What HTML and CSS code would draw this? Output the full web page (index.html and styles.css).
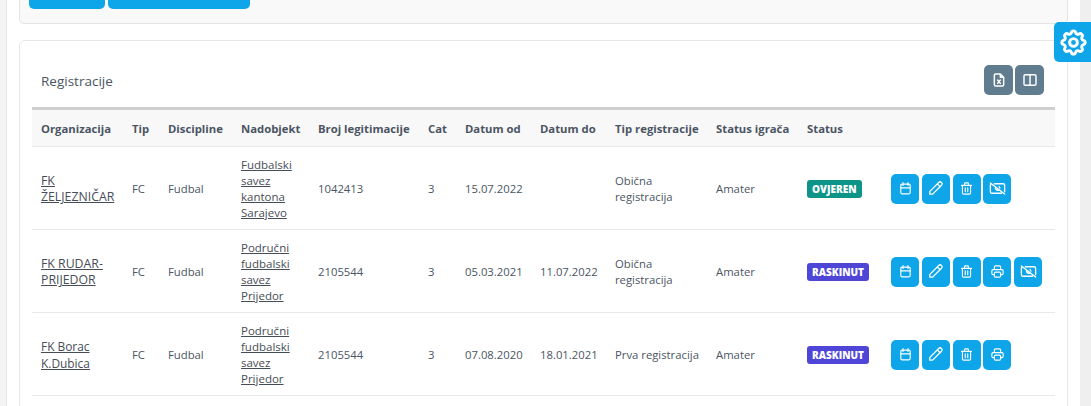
FILE: index.html
```html
<!DOCTYPE html>
<html lang="bs">
<head>
<meta charset="utf-8">
<title>Registracije</title>
<link rel="stylesheet" href="styles.css">
</head>
<body>
<svg class="defs" width="0" height="0" aria-hidden="true">
  <symbol id="i-cal" viewBox="0 0 24 24"><rect x="4.500" y="5" width="15" height="15.500" rx="2"/><path d="M16 2.500v4.500M8 2.500v4.500M4.500 11h15"/></symbol>
  <symbol id="i-pen" viewBox="0 0 24 24"><path d="M4 20v-4L16.500 3.500a2.800 2.800 0 0 1 4 4L8 20zM14.500 5.500l4 4"/></symbol>
  <symbol id="i-trash" viewBox="0 0 24 24"><path d="M4 7h16M10 11v6M14 11v6M5.500 7v12a2 2 0 0 0 2 2h9a2 2 0 0 0 2-2V7M9 7V4a1 1 0 0 1 1-1h4a1 1 0 0 1 1 1v3"/></symbol>
  <symbol id="i-print" viewBox="0 0 24 24"><path d="M17 17h2a2 2 0 0 0 2-2v-4a2 2 0 0 0-2-2H5a2 2 0 0 0-2 2v4a2 2 0 0 0 2 2h2M17 9V5a2 2 0 0 0-2-2H9a2 2 0 0 0-2 2v4"/><rect x="7" y="13" width="10" height="8" rx="2"/></symbol>
  <symbol id="i-off" viewBox="0 0 24 24"><path d="M3 5l18 14M8 6h11a2 2 0 0 1 2 2v8M17 18H5a2 2 0 0 1-2-2V8a2 2 0 0 1 1-1.700M9.500 10.500a3 3 0 0 0 4 3.500M14 9.500l1 2"/></symbol>
  <symbol id="i-xls" viewBox="0 0 24 24"><path d="M14 3v5h5M17 21H7a2 2 0 0 1-2-2V5a2 2 0 0 1 2-2h7l5 5v11a2 2 0 0 1-2 2zM10 12l4 5M14 12l-4 5"/></symbol>
  <symbol id="i-cols" viewBox="0 0 24 24"><rect x="3" y="4" width="18" height="16" rx="2"/><path d="M12 4v16"/></symbol>
  <symbol id="i-gear" viewBox="0 0 24 24"><path d="M10.325 4.317c.426-1.756 2.924-1.756 3.350 0a1.724 1.724 0 0 0 2.573 1.066c1.543-.940 3.310.826 2.370 2.370a1.724 1.724 0 0 0 1.065 2.572c1.756.426 1.756 2.924 0 3.350a1.724 1.724 0 0 0-1.066 2.573c.940 1.543-.826 3.310-2.370 2.370a1.724 1.724 0 0 0-2.572 1.065c-.426 1.756-2.924 1.756-3.350 0a1.724 1.724 0 0 0-2.573-1.066c-1.543.940-3.310-.826-2.370-2.370a1.724 1.724 0 0 0-1.065-2.572c-1.756-.426-1.756-2.924 0-3.350a1.724 1.724 0 0 0 1.066-2.573c-.940-1.543.826-3.310 2.370-2.370 1 .608 2.296.070 2.572-1.065z"/><circle cx="12" cy="12" r="3"/></symbol>
</svg>
<div class="shell">
  <div class="rail-left"></div>
  <main class="main">
    <section class="card-top">
      <button class="btn-top btn-a">Nazad</button>
      <button class="btn-top btn-b">Uvoz registracija</button>
    </section>
    <section class="card">
      <header class="card-head">
        <h2 class="card-title">Registracije</h2>
        <div class="tools">
          <button class="tool"><svg class="ico tool-ico"><use href="#i-xls"/></svg></button>
          <button class="tool"><svg class="ico tool-ico"><use href="#i-cols"/></svg></button>
        </div>
      </header>
      <table class="grid">
        <colgroup>
          <col class="c1"><col class="c2"><col class="c3"><col class="c4"><col class="c5"><col class="c6"><col class="c7"><col class="c8"><col class="c9"><col class="c10"><col class="c11"><col class="c12">
        </colgroup>
        <thead>
          <tr><th>Organizacija</th><th>Tip</th><th>Discipline</th><th>Nadobjekt</th><th>Broj legitimacije</th><th>Cat</th><th>Datum od</th><th>Datum do</th><th>Tip registracije</th><th>Status igrača</th><th>Status</th><th></th></tr>
        </thead>
        <tbody>
          <tr>
            <td><a class="caps" href="#">FK ŽELJEZNIČAR</a></td><td>FC</td><td>Fudbal</td>
            <td><a href="#">Fudbalski savez kantona Sarajevo</a></td>
            <td>1042413</td><td>3</td><td>15.07.2022</td><td></td><td>Obična registracija</td><td>Amater</td>
            <td><span class="badge ok">OVJEREN</span></td>
            <td><div class="acts">
              <button class="act"><svg class="ico"><use href="#i-cal"/></svg></button>
              <button class="act"><svg class="ico big"><use href="#i-pen"/></svg></button>
              <button class="act"><svg class="ico"><use href="#i-trash"/></svg></button>
              <button class="act"><svg class="ico wide"><use href="#i-off"/></svg></button>
            </div></td>
          </tr>
          <tr>
            <td><a class="caps" href="#">FK RUDAR-PRIJEDOR</a></td><td>FC</td><td>Fudbal</td>
            <td><a href="#">Područni fudbalski savez Prijedor</a></td>
            <td>2105544</td><td>3</td><td>05.03.2021</td><td>11.07.2022</td><td>Obična registracija</td><td>Amater</td>
            <td><span class="badge end">RASKINUT</span></td>
            <td><div class="acts">
              <button class="act"><svg class="ico"><use href="#i-cal"/></svg></button>
              <button class="act"><svg class="ico big"><use href="#i-pen"/></svg></button>
              <button class="act"><svg class="ico"><use href="#i-trash"/></svg></button>
              <button class="act"><svg class="ico"><use href="#i-print"/></svg></button>
              <button class="act"><svg class="ico wide"><use href="#i-off"/></svg></button>
            </div></td>
          </tr>
          <tr>
            <td><a class="org" href="#">FK Borac K.Dubica</a></td><td>FC</td><td>Fudbal</td>
            <td><a href="#">Područni fudbalski savez Prijedor</a></td>
            <td>2105544</td><td>3</td><td>07.08.2020</td><td>18.01.2021</td><td class="nowrap">Prva registracija</td><td>Amater</td>
            <td><span class="badge end">RASKINUT</span></td>
            <td><div class="acts">
              <button class="act"><svg class="ico"><use href="#i-cal"/></svg></button>
              <button class="act"><svg class="ico big"><use href="#i-pen"/></svg></button>
              <button class="act"><svg class="ico"><use href="#i-trash"/></svg></button>
              <button class="act"><svg class="ico"><use href="#i-print"/></svg></button>
            </div></td>
          </tr>
        </tbody>
      </table>
    </section>
  </main>
  <div class="rail-right"></div>
</div>
<button class="gear"><svg class="gear-ico"><use href="#i-gear"/></svg></button>
</body>
</html>
```
FILE: styles.css
```css
* { box-sizing: border-box; }
html, body { margin: 0; height: 406px; overflow: hidden; background: #fff; }
body { font: 11.300px/16px "Open Sans", sans-serif; color: #4b5563; }
.defs { position: absolute; }
.shell { display: flex; height: 406px; overflow: hidden; }
.rail-left { flex: 0 0 7px; background: #f4f4f4; border-right: 1px solid #e6e6e6; }
.rail-right { flex: 0 0 11px; background: #efefef; }
.main { flex: 1; min-width: 0; padding: 0 12px; }
.card-top {
  height: 46px; margin-top: -22px; padding: 0 9px; display: flex; gap: 3px;
  background: #f9f9f9; border: 1px solid #e4e4e4; border-radius: 5px;
}
.btn-top {
  height: 30px; padding: 0 0 4px; border: 0; border-radius: 5px; background: #0ea5e9;
  color: #fff; font: 600 11.300px/16px "Open Sans", sans-serif;
}
.btn-a { width: 76px; }
.btn-b { width: 142px; padding-left: 8px; }
.card {
  margin-top: 16px; height: 380px; padding: 0 12px;
  background: #fff; border: 1px solid #e6e6e6; border-radius: 6px;
}
.card-head { height: 66px; padding: 24px 11px 0 9px; display: flex; justify-content: space-between; }
.card-title { margin: 7px 0 0; font-size: 13.500px; line-height: 18px; font-weight: 400; color: #4b5563; }
.tools { display: flex; gap: 2px; }
.tool, .act {
  display: flex; align-items: center; justify-content: center; height: 30px; padding: 0; border: 0; border-radius: 5px; color: #fff;
}
.tool { width: 29px; background: #5f7d8e; }
.act { width: 28px; background: #0ea5e9; }
.ico { width: 15px; height: 15px; fill: none; stroke: currentColor; stroke-width: 1.800; stroke-linecap: round; stroke-linejoin: round; }
.ico.big { width: 17px; height: 17px; }
.ico.wide { width: 19px; height: 19px; stroke-width: 1.700; }
.ico.tool-ico { width: 16px; height: 16px; stroke-width: 2.200; }
.grid { width: 1023px; table-layout: fixed; border-collapse: collapse; }
.c1 { width: 91px; } .c2 { width: 36px; } .c3 { width: 73px; } .c4 { width: 77px; }
.c5 { width: 110px; } .c6 { width: 37px; } .c7 { width: 75px; } .c8 { width: 75px; }
.c9 { width: 101px; } .c10 { width: 91px; } .c11 { width: 84px; } .c12 { width: 173px; }
.grid th {
  height: 38px; padding: 2px 9px 0; text-align: left; font-weight: 700; white-space: nowrap; color: #4b5563;
  background: #f8f8f8; border-top: 3px solid #cfcfcf; border-bottom: 1px solid #e8e8e8;
}
.grid td { padding: 10px 9px 8px; height: 83px; vertical-align: middle; border-bottom: 1px solid #e8e8e8; }
.grid .nowrap { white-space: nowrap; }
.grid a { font-size: 11.500px; color: #474d57; text-decoration: underline; }
.grid .caps { font-size: 12.300px; }
.grid .org { font-size: 11.900px; }
.acts { display: flex; gap: 2.750px; margin-top: -1px; }
.badge {
  display: inline-block; height: 18px; padding: 0 5px; border-radius: 3px; vertical-align: middle;
  color: #fff; font-size: 10px; line-height: 18px; font-weight: 800;
}
.ok { background: #0d9488; }
.end { background: #4f46d8; }
.gear {
  position: absolute; left: 1054px; top: 22px; width: 37px; height: 40px; padding: 0 0 0 2px; border: 0;
  border-radius: 5px 0 0 5px; background: #0ea5e9; color: #fff; display: flex; align-items: center; justify-content: center;
}
.gear-ico { width: 31px; height: 31px; fill: none; stroke: currentColor; stroke-width: 2.300; stroke-linecap: round; stroke-linejoin: round; }
```
